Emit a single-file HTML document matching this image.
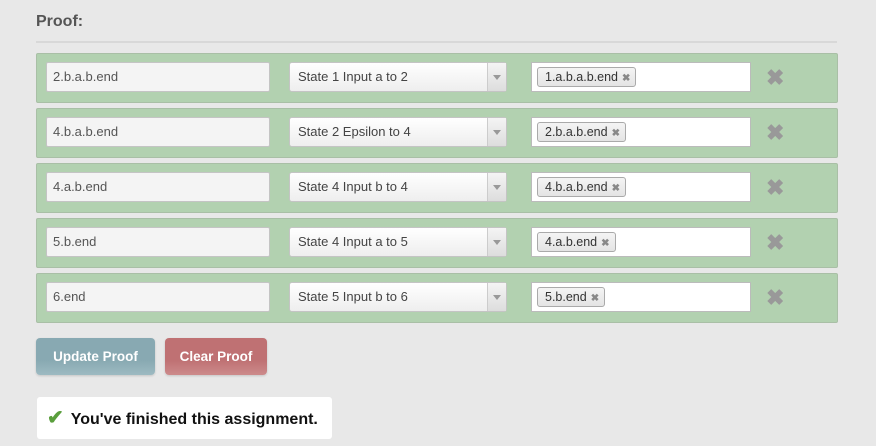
<!DOCTYPE html><html><head><style>
body{margin:0;width:876px;height:446px;background:#e8e8e8;font-family:"Liberation Sans",sans-serif;position:relative;overflow:hidden}
h3{position:absolute;left:36px;top:13px;margin:0;font-size:16px;color:#555;font-weight:bold}
.hr{position:absolute;left:36px;top:41px;width:801px;height:2px;background:#d8d8d8}
.row{position:absolute;left:36px;width:800px;height:48px;background:#b2d1b0;border:1px solid #a9bfa6;border-radius:2px}
.in{position:absolute;left:9px;top:8px;background:#f4f4f4;border:1px solid #c4c4c4;border-radius:2px;font-size:13px;color:#555;line-height:28px;padding-left:6px;box-sizing:border-box;width:224px;height:30px}
.sel{position:absolute;left:252px;top:8px;width:218px;height:30px;box-sizing:border-box;background:linear-gradient(#fff,#eee);border:1px solid #c4c4c4;border-radius:3px;font-size:13px;color:#444;line-height:28px;padding-left:8px}
.sel i{position:absolute;right:0;top:0;width:18px;height:28px;border-left:1px solid #ccc;background:linear-gradient(#f4f4f4,#ddd)}
.sel i:after{content:"";position:absolute;left:5px;top:12px;border:4px solid transparent;border-top:5px solid #999}
.tg{position:absolute;left:494px;top:8px;width:220px;height:30px;box-sizing:border-box;background:#fff;border:1px solid #bbb}
.tag{position:absolute;left:5px;top:4px;height:20px;box-sizing:border-box;border:1px solid #aaa;border-radius:3px;background:linear-gradient(#f4f4f4,#e4e4e4);font-size:12.5px;color:#333;line-height:18px;padding:0 5px 0 7px}
.tag b{color:#888;font-size:10px;margin-left:4px}
.x{position:absolute;left:729px;top:13px;font-size:22px;color:#999;font-weight:bold;line-height:22px}
.btn{position:absolute;top:338px;height:37px;border-radius:4px;color:#fff;font-weight:bold;font-size:13.5px;line-height:37px;text-align:center;box-shadow:0 1px 2px rgba(0,0,0,.15)}
.msg{position:absolute;left:37px;top:397px;width:295px;height:42px;background:#fff;border-radius:3px;font-size:16px;font-weight:bold;color:#111;line-height:42px}
</style></head><body>
<h3>Proof:</h3><div class="hr"></div>
<div class="row" style="top:53px"><div class="in">2.b.a.b.end</div><div class="sel">State 1 Input a to 2<i></i></div><div class="tg"><span class="tag">1.a.b.a.b.end<b>✖</b></span></div><span class="x">✖</span></div>
<div class="row" style="top:108px"><div class="in">4.b.a.b.end</div><div class="sel">State 2 Epsilon to 4<i></i></div><div class="tg"><span class="tag">2.b.a.b.end<b>✖</b></span></div><span class="x">✖</span></div>
<div class="row" style="top:163px"><div class="in">4.a.b.end</div><div class="sel">State 4 Input b to 4<i></i></div><div class="tg"><span class="tag">4.b.a.b.end<b>✖</b></span></div><span class="x">✖</span></div>
<div class="row" style="top:218px"><div class="in">5.b.end</div><div class="sel">State 4 Input a to 5<i></i></div><div class="tg"><span class="tag">4.a.b.end<b>✖</b></span></div><span class="x">✖</span></div>
<div class="row" style="top:273px"><div class="in">6.end</div><div class="sel">State 5 Input b to 6<i></i></div><div class="tg"><span class="tag">5.b.end<b>✖</b></span></div><span class="x">✖</span></div>
<div class="btn" style="left:36px;width:119px;background:linear-gradient(#88a9b2 60%,#9dbac1)">Update Proof</div>
<div class="btn" style="left:165px;width:102px;background:linear-gradient(#bf7173 60%,#cc8a8b)">Clear Proof</div>
<div class="msg"><span style="color:#5a9e3c;font-size:20px;margin:0 7px 0 10px">✔</span>You've finished this assignment.</div>
</body></html>
